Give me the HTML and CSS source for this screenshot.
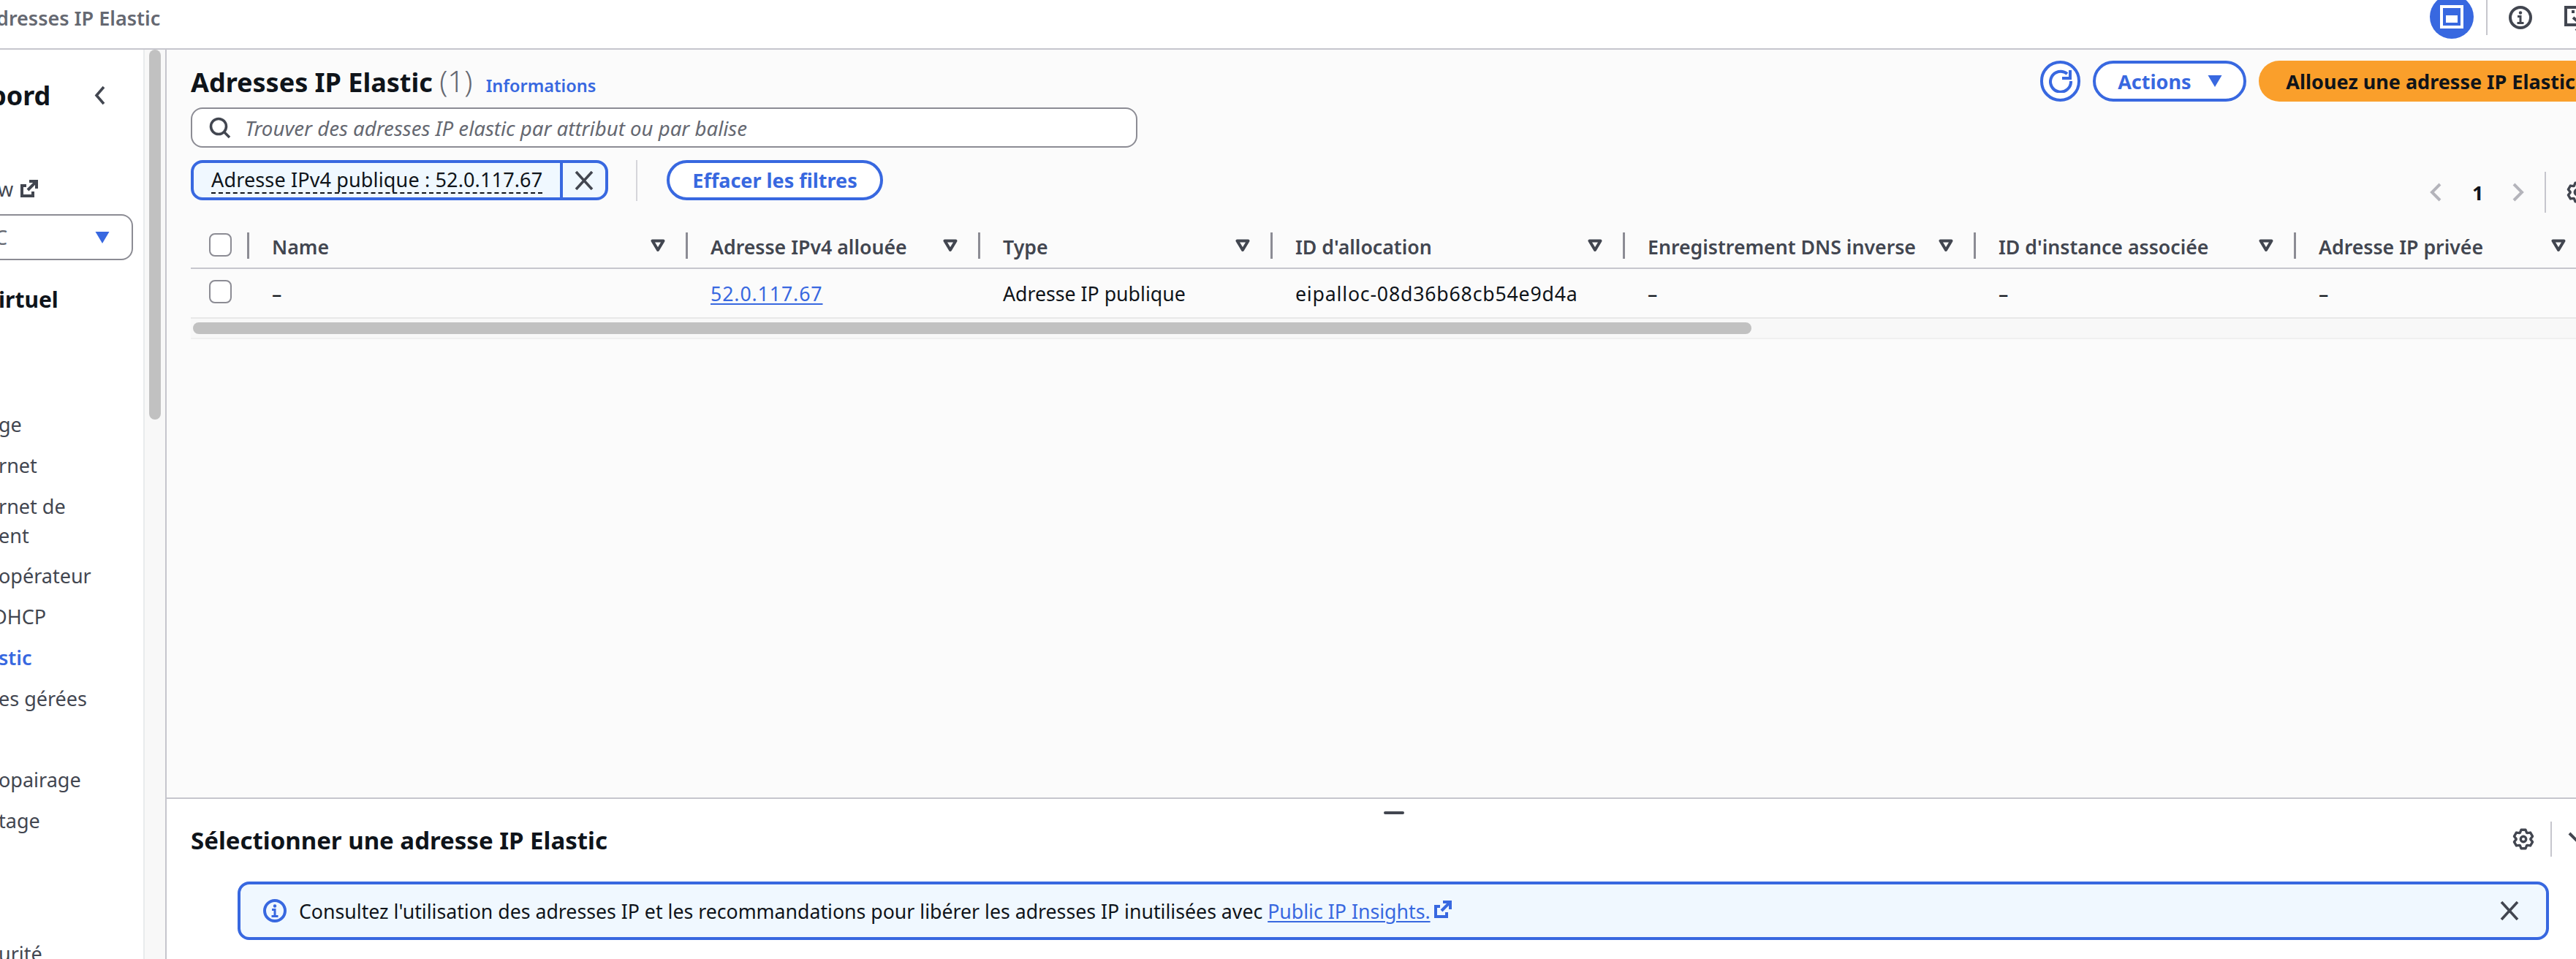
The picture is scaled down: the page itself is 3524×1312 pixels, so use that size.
FILE: index.html
```html
<!DOCTYPE html>
<html lang="fr">
<head>
<meta charset="utf-8">
<title>Adresses IP Elastic</title>
<link rel="stylesheet" href="styles.css">
</head>
<body>
<svg class="defs" aria-hidden="true">
  <symbol id="gear" viewBox="0 0 32 32"><polygon fill="none" stroke="currentColor" stroke-width="3.6" stroke-linejoin="round" points="12.85,2.36 19.15,2.36 20.93,6.73 21.56,7.1 26.24,6.45 29.39,11.91 26.49,15.63 26.49,16.37 29.39,20.09 26.24,25.55 21.56,24.9 20.93,25.27 19.15,29.64 12.85,29.64 11.07,25.27 10.44,24.9 5.76,25.55 2.61,20.09 5.51,16.37 5.51,15.63 2.61,11.91 5.76,6.45 10.44,7.1 11.07,6.73"/><circle cx="16" cy="16" r="4" fill="none" stroke="currentColor" stroke-width="3.6"/></symbol>
  <symbol id="filt" viewBox="0 0 20 18"><path d="M2.500 2.500H17.500L10 15Z" fill="none" stroke="currentColor" stroke-width="4" stroke-linejoin="round"/></symbol>
  <symbol id="ext" viewBox="0 0 24 24"><path d="M8 8H2V22H17V16M10 14L21 3M12 2H22V12" fill="none" stroke="currentColor" stroke-width="4"/></symbol>
  <symbol id="x" viewBox="0 0 26 26"><path d="M2 1L24 25M24 1L2 25" fill="none" stroke="currentColor" stroke-width="3.6"/></symbol>
  <symbol id="info" viewBox="0 0 32 32"><circle cx="16" cy="16" r="14" fill="none" stroke="currentColor" stroke-width="4"/><circle cx="16" cy="9.5" r="2.2" fill="currentColor"/><path d="M12 14.5H16V24M11.500 23.500H20.500" fill="none" stroke="currentColor" stroke-width="3"/></symbol>
  <symbol id="tri" viewBox="0 0 20 16"><path d="M0.500 0H19.500L10 16Z" fill="currentColor"/></symbol>
</svg>

<header class="topbar">
  <span class="crumb">dresses IP Elastic</span>
  <div class="top-icons">
    <span class="panel-toggle">
      <svg class="panel-glyph" viewBox="0 0 32 32"><rect x="2" y="2" width="28" height="28" fill="none" stroke="currentColor" stroke-width="4"/><rect x="8" y="14" width="16" height="10" fill="currentColor"/></svg>
    </span>
    <span class="top-divider"></span>
    <svg class="ico32 dark top-info"><use href="#info"/></svg>
    <svg class="ico36 dark top-feedback" viewBox="0 0 36 36"><path d="M12 26H2V2H34V20" fill="none" stroke="currentColor" stroke-width="4"/><rect x="10" y="6" width="4" height="4" fill="currentColor"/><rect x="18" y="6" width="4" height="4" fill="currentColor"/><rect x="26" y="6" width="4" height="4" fill="currentColor"/><path d="M12 16L24 26L16 34M24 26H12" fill="none" stroke="currentColor" stroke-width="4"/></svg>
  </div>
</header>

<div class="workspace">
  <aside class="side">
    <nav class="nav">
      <div class="nav-title"><span class="cut-b">bord</span>
        <svg class="chev-back" viewBox="0 0 15 27"><path d="M13 2L3 13.500L13 25" fill="none" stroke="currentColor" stroke-width="3.6"/></svg>
      </div>
      <div class="nav-link">w <svg class="ico24"><use href="#ext"/></svg></div>
      <div class="nav-select"><span>C</span><svg class="tri"><use href="#tri"/></svg></div>
      <div class="nav-section">irtuel</div>
      <ul class="nav-list">
        <li>ge</li>
        <li>rnet</li>
        <li>rnet de<br>ent</li>
        <li>opérateur</li>
        <li class="cut-d">DHCP</li>
        <li class="active">stic</li>
        <li>es gérées</li>
        <li class="blank"></li>
        <li>opairage</li>
        <li>tage</li>
        <li class="far">urité</li>
      </ul>
    </nav>
    <div class="side-track"><div class="side-thumb"></div></div>
  </aside>

  <main class="main">
    <section class="content">
      <div class="head">
        <h1>Adresses IP Elastic <span class="count">(1)</span> <a class="info-link">Informations</a></h1>
        <div class="actions">
          <button class="btn btn-icon"><svg class="ico32" viewBox="0 0 32 32"><path d="M25 6A14 14 0 1 0 30 16M29 1V12H18" fill="none" stroke="currentColor" stroke-width="4"/></svg></button>
          <button class="btn btn-line btn-actions">Actions <svg class="tri"><use href="#tri"/></svg></button>
          <button class="btn btn-primary">Allouez une adresse IP Elastic</button>
        </div>
      </div>

      <div class="search">
        <svg class="search-ico" viewBox="0 0 30 30"><circle cx="13" cy="13" r="10.500" fill="none" stroke="currentColor" stroke-width="3.600"/><path d="M20.500 20.500L28 28" fill="none" stroke="currentColor" stroke-width="3.600"/></svg>
        <span class="placeholder">Trouver des adresses IP elastic par attribut ou par balise</span>
      </div>

      <div class="filters">
        <div class="token">
          <span class="token-label"><span class="dashed">Adresse IPv4 publique : 52.0.117.67</span></span>
          <span class="token-x"><svg class="ico26"><use href="#x"/></svg></span>
        </div>
        <span class="filter-divider"></span>
        <button class="btn btn-line btn-clear">Effacer les filtres</button>
        <div class="pager">
          <svg class="pg-chev" viewBox="0 0 16 26"><path d="M14 2L3 13L14 24" fill="none" stroke="currentColor" stroke-width="4"/></svg>
          <span class="pg-num">1</span>
          <svg class="pg-chev" viewBox="0 0 16 26"><path d="M2 2L13 13L2 24" fill="none" stroke="currentColor" stroke-width="4"/></svg>
          <span class="pg-divider"></span>
          <svg class="gear dark"><use href="#gear"/></svg>
        </div>
      </div>

      <div class="table">
        <div class="tr th">
          <div class="cell-check"><span class="check"></span></div>
          <div class="cell"><span>Name</span><svg class="filt"><use href="#filt"/></svg></div>
          <div class="cell"><span>Adresse IPv4 allouée</span><svg class="filt"><use href="#filt"/></svg></div>
          <div class="cell"><span>Type</span><svg class="filt"><use href="#filt"/></svg></div>
          <div class="cell"><span>ID d'allocation</span><svg class="filt"><use href="#filt"/></svg></div>
          <div class="cell"><span>Enregistrement DNS inverse</span><svg class="filt"><use href="#filt"/></svg></div>
          <div class="cell"><span>ID d'instance associée</span><svg class="filt"><use href="#filt"/></svg></div>
          <div class="cell"><span>Adresse IP privée</span><svg class="filt"><use href="#filt"/></svg></div>
        </div>
        <div class="tr td">
          <div class="cell-check"><span class="check"></span></div>
          <div class="cell"><span>–</span></div>
          <div class="cell"><a class="link ip">52.0.117.67</a></div>
          <div class="cell"><span>Adresse IP publique</span></div>
          <div class="cell"><span class="alloc">eipalloc-08d36b68cb54e9d4a</span></div>
          <div class="cell"><span>–</span></div>
          <div class="cell"><span>–</span></div>
          <div class="cell"><span>–</span></div>
        </div>
        <div class="hscroll"><div class="hthumb"></div></div>
      </div>
    </section>

    <section class="panel">
      <span class="handle"></span>
      <div class="panel-head">
        <h2>Sélectionner une adresse IP Elastic</h2>
        <div class="panel-tools">
          <svg class="gear dark"><use href="#gear"/></svg>
          <span class="panel-divider"></span>
          <svg class="panel-chev dark" viewBox="0 0 32 20"><path d="M2 2L16 16L30 2" fill="none" stroke="currentColor" stroke-width="4"/></svg>
        </div>
      </div>
      <div class="flash">
        <svg class="ico32 blue"><use href="#info"/></svg>
        <span class="flash-text">Consultez l'utilisation des adresses IP et les recommandations pour libérer les adresses IP inutilisées avec <a class="link">Public IP Insights.</a></span>
        <svg class="ico24 blue flash-ext"><use href="#ext"/></svg>
        <svg class="ico26 dark flash-x"><use href="#x"/></svg>
      </div>
    </section>
  </main>
</div>
</body>
</html>
```
FILE: styles.css
```css
* { box-sizing: border-box; }
html, body { margin: 0; padding: 0; }
body {
  width: 3524px;
  height: 1312px;
  overflow: hidden;
  background: #fff;
  color: #0f141a;
  font-family: "Noto Sans", "Open Sans", sans-serif;
  font-size: 27px;
  display: flex;
  flex-direction: column;
}
.defs { position: absolute; width: 0; height: 0; }
a { color: inherit; }
button { font-family: inherit; cursor: pointer; }
h1, h2 { margin: 0; }
.dark { color: #424650; }
.blue { color: #3868e0; }
.ico24 { width: 24px; height: 24px; flex: none; }
.ico26 { width: 26px; height: 26px; flex: none; }
.ico32 { width: 32px; height: 32px; flex: none; }
.ico36 { width: 36px; height: 36px; flex: none; }
.tri { width: 20px; height: 16px; color: #3868e0; flex: none; }
.gear { width: 30px; height: 32px; flex: none; }

/* top bar */
.topbar {
  height: 68px;
  flex: none;
  border-bottom: 2px solid #c6c6cd;
  display: flex;
  justify-content: space-between;
  align-items: flex-start;
  overflow: hidden;
}
.crumb {
  margin-left: -5px;
  line-height: 50px;
  font-weight: 600;
  color: #656871;
}
.top-icons { display: flex; align-items: flex-start; margin-right: -20px; }
.panel-toggle {
  width: 60px;
  height: 60px;
  margin-top: -7px;
  border-radius: 50%;
  background: #3868e0;
  color: #fff;
  display: flex;
  align-items: center;
  justify-content: center;
}
.panel-glyph { width: 32px; height: 32px; }
.top-divider { width: 2px; height: 48px; margin-left: 17px; background: #c6c6cd; }
.top-info { margin: 8px 0 0 29px; }
.top-feedback { margin: 8px 0 0 44px; }

/* workspace */
.workspace { flex: 1; min-height: 0; display: flex; }

/* side nav */
.side {
  width: 228px;
  flex: none;
  display: flex;
  border-right: 2px solid #c6c6cd;
  overflow: hidden;
}
.nav {
  width: 198px;
  flex: none;
  border-right: 2px solid #e9ebed;
  background: #fff;
  color: #424650;
  overflow: hidden;
}
.nav-title {
  margin-top: 40px;
  height: 44px;
  display: flex;
  align-items: center;
  justify-content: space-between;
  padding-right: 52px;
  font-size: 36px;
  font-weight: 700;
  color: #0f141a;
}
.cut-b { margin-left: -14px; }
.chev-back { width: 15px; height: 27px; color: #424650; }
.nav-link {
  margin-top: 86px;
  height: 40px;
  display: flex;
  align-items: center;
  gap: 10px;
  margin-left: -3px;
}
.nav-select {
  margin: 15px 14px 0 -40px;
  height: 63px;
  border: 2px solid #8c8c94;
  border-radius: 16px;
  display: flex;
  align-items: center;
  justify-content: space-between;
  padding: 0 30px 0 31px;
  color: #656871;
}
.nav-section {
  margin-top: 34px;
  margin-left: -2px;
  height: 40px;
  line-height: 40px;
  font-size: 30px;
  font-weight: 700;
  color: #0f141a;
}
.nav-list {
  list-style: none;
  margin: 131px 0 0;
  padding: 0;
  display: flex;
  flex-direction: column;
  gap: 15.8px;
  line-height: 40px;
  white-space: nowrap;
}
.nav-list li { margin-left: -2px; }
.nav-list .cut-d { margin-left: -10px; }
.nav-list .active { color: #3868e0; font-weight: 600; }
.nav-list .blank { height: 40px; }
.nav-list .far { margin-top: 126px; }
.side-track { flex: 1; background: #f8f8f8; padding-left: 6px; }
.side-thumb { width: 16px; height: 506px; border-radius: 8px; background: #c1c1c1; }

/* main */
.main { flex: 1; min-width: 0; display: flex; flex-direction: column; }
.content {
  flex: 1;
  min-height: 0;
  background: #fbfbfb;
  padding: 15px 0 0 33px;
  overflow: hidden;
}
.head { display: flex; justify-content: space-between; align-items: flex-start; height: 56px; }
h1 { font-size: 36px; font-weight: 700; line-height: 56px; white-space: nowrap; }
.count { font-size: 40px; font-weight: 300; color: #656871; }
.info-link { font-size: 23.5px; font-weight: 600; color: #3868e0; margin-left: 9px; }
.actions { display: flex; gap: 17px; margin-right: -36px; }
.btn {
  height: 56px;
  border-radius: 28px;
  font-size: 27px;
  font-weight: 700;
  padding: 0;
  display: flex;
  align-items: center;
  justify-content: center;
  white-space: nowrap;
}
.btn-icon { width: 55px; border: 4px solid #3868e0; background: #fff; color: #3868e0; }
.btn-line { border: 4px solid #3868e0; background: #fff; color: #3868e0; padding: 0 33px; gap: 22px; }
.btn-actions { width: 210px; padding: 0; }
.btn-primary { border: 0; background: #fa9f2b; color: #0f141a; padding: 0 37px; }

.search {
  margin-top: 8px;
  width: 1295px;
  height: 55px;
  border: 2px solid #8c8c94;
  border-radius: 16px;
  background: #fff;
  display: flex;
  align-items: center;
  gap: 19px;
  padding-left: 23px;
}
.search-ico { width: 30px; height: 30px; color: #424650; flex: none; }
.placeholder { font-style: italic; font-size: 27.6px; color: #656871; }

.filters { margin-top: 17px; height: 72px; display: flex; align-items: flex-start; }
.token {
  height: 55px;
  border: 4px solid #3868e0;
  border-radius: 16px;
  background: #f0f8ff;
  display: flex;
  align-items: stretch;
}
.token-label {
  display: flex;
  align-items: center;
  padding: 0 24px;
  border-right: 4px solid #3868e0;
}
.dashed { border-bottom: 2px dashed #0f141a; line-height: 34px; letter-spacing: 0.14px; }
.token-x { width: 58px; display: flex; align-items: center; justify-content: center; color: #424650; }
.filter-divider { width: 2px; height: 56px; margin-left: 38px; background: #d5d5da; }
.btn-clear { margin-left: 40px; height: 55px; padding: 0 31px; }
.pager {
  margin-left: auto;
  margin-right: -17px;
  margin-top: 16px;
  height: 56px;
  display: flex;
  align-items: center;
}
.pg-chev { width: 16px; height: 26px; color: #b4b4bb; flex: none; }
.pg-num { width: 10px; margin: 0 45px 0 42px; font-weight: 700; line-height: 1; text-align: center; }
.pg-divider { width: 2px; height: 56px; margin: 0 28px; background: #c6c6cd; }

/* table */
.table { margin-top: 9px; }
.tr {
  display: grid;
  grid-template-columns: 77px 600px 400px 400px 482px 480px 438px 400px;
  align-items: center;
  height: 68px;
}
.th { border-bottom: 2px solid #c6c6cd; padding-top: 6px; color: #424650; font-size: 26.7px; font-weight: 600; }
.th span { position: relative; top: 1px; }
.td { border-bottom: 2px solid #e8e8e8; font-size: 26.7px; }
.cell-check { padding-left: 25px; display: flex; }
.th .cell-check { margin-top: -4px; }
.td .cell-check { margin-top: -5px; }
.check { width: 31px; height: 32px; border: 2px solid #8c8c94; border-radius: 8px; background: #fff; }
.cell { display: flex; align-items: center; justify-content: space-between; padding: 0 28px 0 34px; white-space: nowrap; }
.th .cell { border-left: 3px solid #8c8c94; height: 36px; padding-left: 31px; }
.filt { width: 20px; height: 18px; color: #424650; flex: none; }
.link { color: #3868e0; text-decoration: underline; text-underline-offset: 3px; text-decoration-thickness: 2px; }
.ip { letter-spacing: 0.9px; }
.alloc { letter-spacing: 0.8px; }
.hscroll { height: 28px; background: #f8f8f8; border-bottom: 2px solid #f0f0f0; padding: 5px 0 0 3px; }
.hthumb { width: 2132px; height: 16px; border-radius: 8px; background: #c1c1c1; }

/* bottom panel */
.panel {
  flex: none;
  height: 221px;
  border-top: 2px solid #c6c6cd;
  background: #fff;
  position: relative;
  padding-top: 31px;
}
.handle { position: absolute; left: 1665px; top: 17px; width: 28px; height: 4px; border-radius: 2px; background: #424650; }
.panel-head { display: flex; justify-content: space-between; align-items: center; height: 48px; padding-left: 33px; }
h2 { font-size: 33px; font-weight: 700; white-space: nowrap; padding-top: 3px; }
.panel-tools { display: flex; align-items: center; margin-right: -21px; }
.panel-divider { width: 2px; height: 48px; margin: 0 22px; background: #c6c6cd; }
.panel-chev { width: 32px; height: 20px; }
.flash {
  margin: 34px 0 0 97px;
  width: 3162px;
  height: 80px;
  border: 4px solid #3868e0;
  border-radius: 16px;
  background: #f0f8ff;
  display: flex;
  align-items: center;
  padding: 0 37px 0 31px;
  font-size: 26.7px;
}
.flash-text { margin-left: 17px; white-space: nowrap; }
.flash-ext { margin: -4px 0 0 5px; }
.flash-x { margin-left: auto; }
```
